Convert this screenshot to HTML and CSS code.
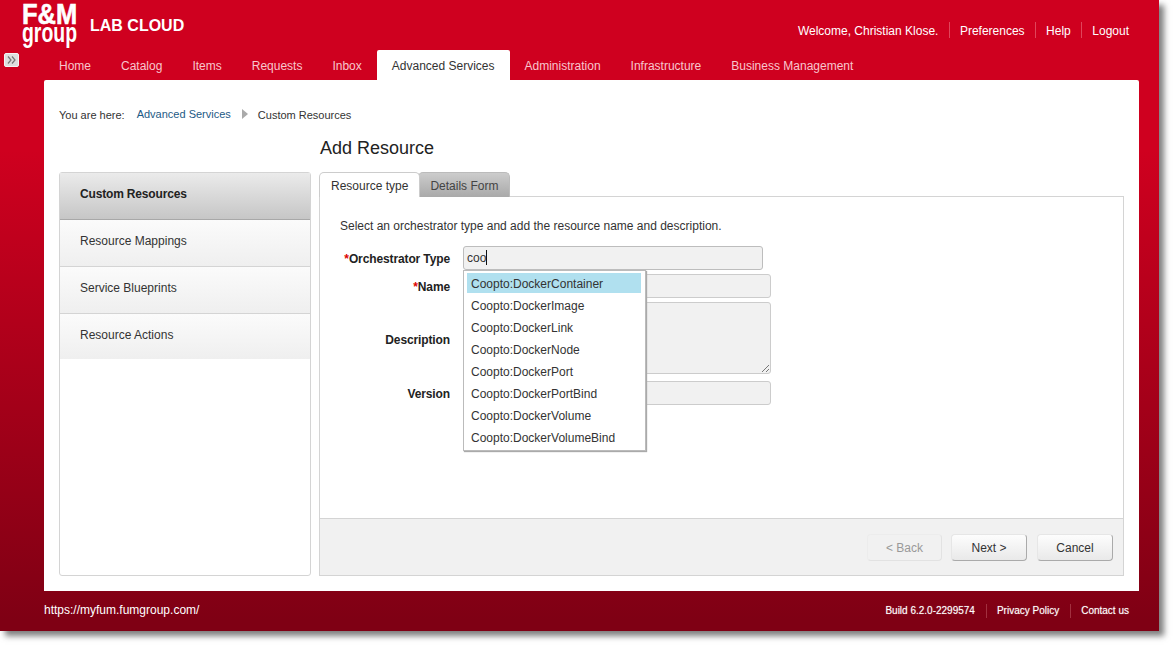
FILE: index.html
```html
<!DOCTYPE html>
<html>
<head>
<meta charset="UTF-8">
  <title>LAB CLOUD</title>
  <link rel="stylesheet" href="styles.css">
</head>
<body>
<div id="frame">
  <button class="toggle" type="button">
    <svg width="10" height="8" viewBox="0 0 10 8"><path d="M1 0.5L4 4L1 7.5M5 0.5L8 4L5 7.5" fill="none" stroke="#777" stroke-width="1.2"/></svg>
  </button>

  <div id="header">
    <div class="logo">
      <span class="logo-top">F&amp;M</span>
      <span class="logo-bottom">group</span>
    </div>
    <div class="brand">LAB CLOUD</div>
    <ul class="user-links">
      <li>Welcome, Christian Klose.</li>
      <li>Preferences</li>
      <li>Help</li>
      <li>Logout</li>
    </ul>
  </div>

  <ul id="nav">
    <li>Home</li>
    <li>Catalog</li>
    <li>Items</li>
    <li>Requests</li>
    <li>Inbox</li>
    <li class="active">Advanced Services</li>
    <li>Administration</li>
    <li>Infrastructure</li>
    <li>Business Management</li>
  </ul>

  <div id="panel">
    <div class="crumbs">
      <span class="crumb-label">You are here:</span>
      <a class="crumb-link">Advanced Services</a>
      <span class="crumb-arrow"></span>
      <span>Custom Resources</span>
    </div>

    <div class="columns">
      <ul class="side">
        <li class="current">Custom Resources</li>
        <li>Resource Mappings</li>
        <li>Service Blueprints</li>
        <li>Resource Actions</li>
      </ul>

      <div class="content">
        <h2>Add Resource</h2>
        <div class="tabs">
          <div class="tab on">Resource type</div>
          <div class="tab">Details Form</div>
        </div>
        <div class="tab-body">
          <div class="form">
            <p class="intro">Select an orchestrator type and add the resource name and description.</p>

            <div class="row first">
              <label><b>*</b>Orchestrator Type</label>
              <div class="field short">coo<i class="caret"></i></div>
              <ul class="suggest">
                <li class="hit">Coopto:DockerContainer</li>
                <li>Coopto:DockerImage</li>
                <li>Coopto:DockerLink</li>
                <li>Coopto:DockerNode</li>
                <li>Coopto:DockerPort</li>
                <li>Coopto:DockerPortBind</li>
                <li>Coopto:DockerVolume</li>
                <li>Coopto:DockerVolumeBind</li>
              </ul>
            </div>
            <div class="row">
              <label><b>*</b>Name</label>
              <div class="field"></div>
            </div>
            <div class="row area-row">
              <label>Description</label>
              <div class="field area">
                <svg class="grip" width="9" height="9" viewBox="0 0 9 9"><path d="M1 8L8 1M5 8L8 5" stroke="#777" stroke-width="1"/></svg>
              </div>
            </div>
            <div class="row version">
              <label>Version</label>
              <div class="field"></div>
            </div>
          </div>

          <div class="actions">
            <button class="btn off" type="button">&lt; Back</button>
            <button class="btn" type="button">Next &gt;</button>
            <button class="btn" type="button">Cancel</button>
          </div>
        </div>
      </div>
    </div>
  </div>

  <div id="footer">
    <span class="site">https://myfum.fumgroup.com/</span>
    <ul class="foot-links">
      <li>Build 6.2.0-2299574</li>
      <li>Privacy Policy</li>
      <li>Contact us</li>
    </ul>
  </div>
</div>
</body>
</html>
```

FILE: styles.css
```css
html, body {
  margin: 0;
  padding: 0;
  background: #fff;
}

body {
  width: 1174px;
  height: 646px;
  overflow: hidden;
  font-family: "Liberation Sans", Arial, sans-serif;
  font-size: 12px;
  color: #333;
}

ul {
  list-style: none;
  margin: 0;
  padding: 0;
}

#frame {
  position: relative;
  width: 1159px;
  height: 631px;
  display: flex;
  flex-direction: column;
  background: linear-gradient(to bottom, #cf001f 0, #cf001f 150px, #7f0014 620px, #7f0014 100%);
  box-shadow: 5px 5px 6px rgba(40, 40, 40, 0.6);
}

.toggle {
  position: absolute;
  left: 4px;
  top: 53px;
  width: 15px;
  height: 14px;
  padding: 0;
  border: 1px solid #f4f4f4;
  border-radius: 2px;
  background: #dedede;
  display: flex;
  align-items: center;
  justify-content: center;
}

/* header */
#header {
  height: 50px;
  display: flex;
  color: #fff;
}

.logo {
  width: 56px;
  margin-left: 22px;
  padding-top: 2px;
  color: #fff;
  font-weight: bold;
}

.logo-top {
  display: block;
  font-size: 30px;
  line-height: 23px;
  transform: scaleX(0.85);
  transform-origin: left;
  -webkit-text-stroke: 0.6px #fff;
}

.logo-bottom {
  display: block;
  margin-top: 1px;
  font-size: 27px;
  line-height: 14px;
  transform: scaleX(0.72);
  transform-origin: left;
}

.brand {
  margin-left: 12px;
  padding-top: 17px;
  font-size: 16px;
  line-height: 18px;
  font-weight: bold;
}

.user-links {
  margin-left: auto;
  margin-right: 30px;
  padding-top: 22px;
  display: flex;
  align-items: flex-start;
}

.user-links li {
  height: 16px;
  padding: 0 10.5px 0 10px;
  line-height: 18px;
  border-left: 1px solid #e0455a;
}

.user-links li:first-child {
  border-left: 0;
}

.user-links li:last-child {
  padding-right: 0;
}

/* main nav */
#nav {
  height: 30px;
  margin-left: 44px;
  display: flex;
}

#nav li {
  padding: 0 15px;
  line-height: 33px;
  color: #f8c6cd;
}

#nav li.active {
  background: #fff;
  color: #333;
  border-radius: 2px 2px 0 0;
}

/* panel */
#panel {
  height: 511px;
  margin: 0 20px 0 44px;
  box-sizing: border-box;
  padding: 27px 15px 15px;
  background: #fff;
  border-radius: 2px 2px 0 0;
  display: flex;
  flex-direction: column;
}

.crumbs {
  height: 16px;
  display: flex;
  align-items: center;
  font-size: 11px;
  line-height: 16px;
}

.crumb-link {
  margin-left: 12px;
  color: #1d5a85;
  position: relative;
  top: -1px;
}

.crumb-arrow {
  width: 0;
  height: 0;
  margin: 0 10px 2px 11px;
  border-left: 6px solid #aaa;
  border-top: 5px solid transparent;
  border-bottom: 5px solid transparent;
}

.columns {
  flex: 1;
  display: flex;
  gap: 8px;
}

.side {
  width: 252px;
  margin-top: 49px;
  box-sizing: border-box;
  border: 1px solid #d4d4d4;
  border-radius: 3px;
}

.side li {
  height: 47px;
  box-sizing: border-box;
  padding-left: 20px;
  line-height: 43px;
  background: linear-gradient(to bottom, #fbfbfb, #efefef);
  border-bottom: 1px solid #d4d4d4;
}

.side li.current {
  font-weight: bold;
  letter-spacing: -0.17px;
  color: #222;
  line-height: 42px;
  background: linear-gradient(to bottom, #ebebeb, #c6c6c6);
  border-bottom: 1px solid #a8a8a8;
}

.side li:last-child {
  height: 45px;
  border-bottom: 0;
}

.content {
  flex: 1;
  display: flex;
  flex-direction: column;
}

h2 {
  margin: 14px 0 0;
  padding-left: 1px;
  height: 22px;
  font-size: 18px;
  line-height: 22px;
  font-weight: normal;
  color: #222;
}

.tabs {
  margin-top: 12px;
  height: 25px;
  display: flex;
  align-items: flex-end;
  position: relative;
  z-index: 1;
  top: 1px;
}

.tab {
  height: 25px;
  box-sizing: border-box;
  margin-left: -2px;
  padding: 0 11px;
  line-height: 26px;
  border: 1px solid #bbb;
  border-bottom: 0;
  border-radius: 5px 5px 0 0;
  background: linear-gradient(to bottom, #ccc, #a9a9a9);
  color: #444;
}

.tab.on {
  position: relative;
  z-index: 1;
  margin-left: 0;
  background: #fff;
  border-color: #ccc;
  color: #333;
}

.tab-body {
  flex: 1;
  display: flex;
  flex-direction: column;
  border: 1px solid #d4d4d4;
}

.form {
  flex: 1;
  padding: 0 20px;
}

.intro {
  margin: 21px 0 0;
  line-height: 16px;
}

.row {
  position: relative;
  display: flex;
  align-items: center;
  margin-top: 4px;
}

.row.first {
  margin-top: 12px;
}

.row.version {
  margin-top: 7px;
}

.row label {
  width: 110px;
  margin-right: 13px;
  padding-top: 2px;
  text-align: right;
  font-weight: bold;
  letter-spacing: -0.12px;
  color: #222;
}

.row.area-row label {
  padding-top: 4px;
}

.row label b {
  color: #d00;
}

.field {
  width: 308px;
  height: 24px;
  box-sizing: border-box;
  padding: 0 3px;
  background: #f1f1f1;
  border: 1px solid #ccc;
  border-radius: 3px;
  line-height: 23px;
  color: #333;
  position: relative;
}

.field.short {
  width: 300px;
  border-color: #bdbdbd;
}

.field.area {
  height: 72px;
}

.grip {
  position: absolute;
  right: 0;
  bottom: 0;
}

.caret {
  display: inline-block;
  width: 1px;
  height: 15px;
  background: #111;
  vertical-align: -3px;
}

.suggest {
  position: absolute;
  z-index: 5;
  left: 123px;
  top: 24px;
  width: 183px;
  height: 181px;
  box-sizing: border-box;
  padding: 2px 4px 0 3px;
  background: #fff;
  border: 1px solid #bbb;
  box-shadow: 1px 1px 1px #aaa;
}

.suggest li {
  height: 22px;
  padding-left: 4px;
  line-height: 23px;
  color: #333;
}

.suggest li.hit {
  height: 20px;
  line-height: 22px;
  margin-bottom: 2px;
  background: #b0e0ef;
}

.actions {
  height: 57px;
  box-sizing: border-box;
  padding: 15px 10px 0 0;
  background: #f1f1f1;
  border-top: 1px solid #d4d4d4;
  display: flex;
  justify-content: flex-end;
  align-items: flex-start;
  gap: 10px;
}

.btn {
  width: 76px;
  height: 27px;
  padding: 0;
  font-family: inherit;
  font-size: 12px;
  color: #333;
  background: linear-gradient(to bottom, #fdfdfd, #e9e9e9);
  border: 1px solid #e6e6e6;
  border-right-color: #aaa;
  border-bottom-color: #aaa;
  border-radius: 4px;
}

.btn.off {
  width: 75px;
  margin-right: -1px;
  color: #999;
  background: #f1f1f1;
  border-color: #ececec;
  border-right-color: #e2e2e2;
  border-bottom-color: #e2e2e2;
}

/* footer */
#footer {
  flex: 1;
  margin-left: 44px;
  margin-right: 30px;
  display: flex;
  align-items: center;
  color: #fff;
}

.site {
  position: relative;
  top: -1px;
}

.foot-links {
  margin-left: auto;
  display: flex;
  font-size: 10px;
  line-height: 14px;
  text-shadow: 0 0 1px rgba(255, 255, 255, 0.5);
}

.foot-links li {
  padding: 0 11px 0 10px;
  border-left: 1px solid #a2303f;
}

.foot-links li:first-child {
  border-left: 0;
}

.foot-links li:last-child {
  padding-right: 0;
}
```
